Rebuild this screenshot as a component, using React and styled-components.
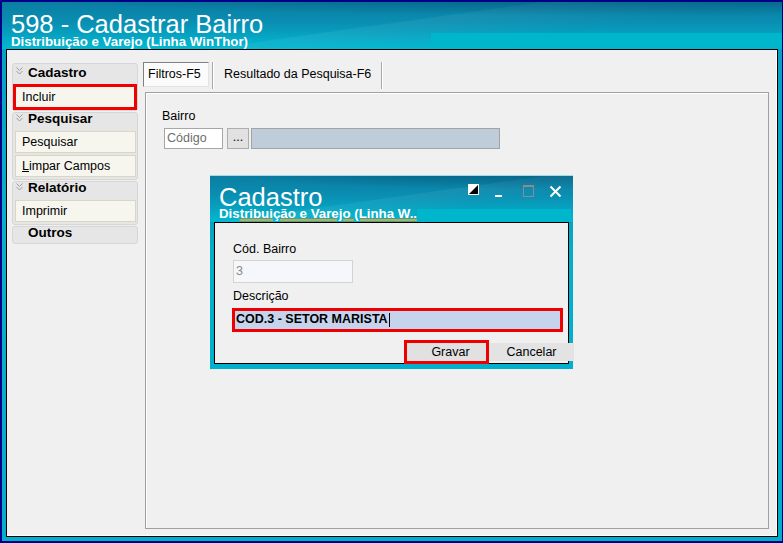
import React from "react";
import styled, { createGlobalStyle } from "styled-components";

const GlobalStyle = createGlobalStyle`
  html, body { margin: 0; padding: 0; }
  body {
    font-family: "Liberation Sans", Arial, sans-serif;
    overflow: hidden;
    background: #ffffff;
  }
  * { box-sizing: border-box; }
`;

const skin = `
  radial-gradient(140% 90% at 82% -25%, rgba(0, 60, 95, 0.6) 0%, rgba(0, 60, 95, 0) 62%),
  radial-gradient(160% 120% at 30% 140%, rgba(0, 200, 220, 0.35) 0%, rgba(0, 200, 220, 0) 60%),
  linear-gradient(172deg, rgba(255,255,255,0) 48%, rgba(255,255,255,0.06) 49%, rgba(255,255,255,0) 70%),
  linear-gradient(180deg, #0a7ea2 0%, #0a8db1 40%, #05a9c6 80%, #02b4cd 100%)
`;

const Window = styled.div`
  position: relative;
  width: 783px;
  height: 543px;
  background: #000088;
  padding: 2px 1px 2px 2px;
`;

const Frame = styled.div`
  height: 100%;
  display: flex;
  flex-direction: column;
  background: linear-gradient(180deg, #0a9cbf 0%, #04b0ca 40%, #04aecb 100%);
`;

const TitleBar = styled.div`
  height: 47px;
  flex: none;
  display: flex;
  flex-direction: column;
  padding: 11px 0 0 9px;
  background: ${skin};
  color: #fff;
`;

const Title = styled.div`
  font-size: 25.5px;
  line-height: 22px;
  height: 22px;
  white-space: nowrap;
`;

const SubRow = styled.div`
  display: flex;
  align-items: flex-end;
  flex: 1;
  margin-top: ${(p) => p.$mt || "-3px"};
`;

const Subtitle = styled.div`
  font-size: 13.3px;
  font-weight: bold;
  line-height: 11px;
  white-space: nowrap;
  margin-bottom: ${(p) => p.$mb || "2px"};
`;

const Mark = styled.span`
  text-decoration: underline;
  text-decoration-color: #f39a1e;
  text-decoration-thickness: 2px;
  text-underline-offset: 1px;
`;

const Band = styled.div`
  background: #00b6cc;
  height: ${(p) => p.$h};
  margin-bottom: ${(p) => p.$mb || "0"};
  ${(p) => (p.$w ? `width: ${p.$w}; margin-left: auto;` : "flex: 1;")}
  margin-right: ${(p) => p.$mr || "0"};
`;

const Client = styled.div`
  flex: 1;
  margin: 0 4px 4px 4px;
  border: 1px solid #000;
  box-shadow: inset -1px -1px 0 #ffffff;
  background: #f0f0f0;
  display: flex;
  padding: 13px 8px 7px 5px;
  min-height: 0;
`;

const Sidebar = styled.div`
  width: 126px;
  flex: none;
  display: flex;
  flex-direction: column;
  gap: 1px;
`;

const Group = styled.div`
  background: #e6e6e6;
  border: 1px solid #d6d6d6;
  border-radius: 3px;
  display: flex;
  flex-direction: column;
  padding-bottom: ${(p) => (p.$tight ? "0" : "2px")};
  gap: 2px;
`;

const GroupHeader = styled.div`
  display: flex;
  align-items: flex-start;
  height: ${(p) => (p.$first ? "20px" : "18px")};
  padding: ${(p) => (p.$first ? "2px" : "0")} 0 0 ${(p) => (p.$noIcon ? "15px" : "3px")};
  font-size: 13.5px;
  font-weight: bold;
  line-height: ${(p) => (p.$first ? "13px" : "12px")};
  color: #000;
  gap: 5px;
  margin-bottom: -2px;
`;

const Chevron = styled.svg`
  flex: none;
  width: 7px;
  height: 8px;
  margin-top: 1px;
`;

const SideButton = styled.div`
  height: ${(p) => (p.$hl ? "26px" : "22px")};
  margin: ${(p) => (p.$hl ? "0" : "0 1px 0 2px")};
  border: ${(p) => (p.$hl ? "3px solid #f00000" : "1px solid #d8d8c2")};
  background: #f6f6ee;
  font-size: 12.5px;
  line-height: 20px;
  padding-left: 6px;
  color: #000;
  white-space: nowrap;
`;

const Main = styled.div`
  flex: 1;
  margin-left: 5px;
  margin-top: -1px;
  display: flex;
  flex-direction: column;
  min-width: 0;
`;

const TabBar = styled.div`
  display: flex;
  height: 25px;
  flex: none;
  margin-bottom: 5px;
`;

const Tab = styled.div`
  height: 25px;
  font-size: 12.5px;
  line-height: 23px;
  white-space: nowrap;
  color: #000;
  ${(p) =>
    p.$active
      ? `
    width: 66px;
    padding-left: 4px;
    border: 1px solid;
    border-color: #808080 #e3e3e3 #e3e3e3 #808080;
    background: #fbfbfb;
  `
      : `
    padding: 1px 10px 0 10px;
  `}
`;

const TabSep = styled.div`
  width: 2px;
  height: 27px;
  margin-left: ${(p) => p.$ml || "0"};
  border-left: 1px solid #a9a9a9;
  border-right: 1px solid #ffffff;
`;

const Panel = styled.div`
  flex: 1;
  margin-left: 2px;
  border: 1px solid #a0a0a0;
  box-shadow: inset 1px 1px 0 #ffffff;
  padding: 16px 0 0 16px;
  display: flex;
  flex-direction: column;
`;

const Label = styled.div`
  font-size: 12.5px;
  line-height: 15px;
  color: #000;
  margin-top: ${(p) => p.$mt || "0"};
`;

const FieldRow = styled.div`
  display: flex;
  margin-top: 4px;
  margin-left: 2px;
  height: 21px;
`;

const TextBox = styled.div`
  width: ${(p) => p.$w};
  height: ${(p) => p.$h || "21px"};
  margin-left: ${(p) => p.$ml || "0"};
  margin-top: ${(p) => p.$mt || "0"};
  border: 1px solid ${(p) => p.$bc || "#a6a6a6"};
  background: ${(p) => p.$bg || "#ffffff"};
  color: ${(p) => p.$color || "#6e6e6e"};
  font-size: 12.5px;
  line-height: ${(p) => (p.$h ? `calc(${p.$h} - 2px)` : "19px")};
  padding-left: 2px;
  white-space: nowrap;
`;

const DotsButton = styled.div`
  width: 22px;
  height: 21px;
  margin-left: 4px;
  border: 1px solid #adadad;
  background: #e1e1e1;
  font-size: 12.5px;
  line-height: 17px;
  text-align: center;
  color: #000;
`;

const Dialog = styled.div`
  position: absolute;
  left: 210px;
  top: 175px;
  width: 363px;
  height: 194px;
  display: flex;
  flex-direction: column;
  padding: 0 4px 5px 4px;
  background: linear-gradient(180deg, #0a8fb3 0%, #04aecb 40%, #00b0cc 100%);
  border-top: 1px solid #9fdce8;
`;

const DialogHeader = styled.div`
  height: 46px;
  flex: none;
  display: flex;
  flex-direction: column;
  margin: 0 -4px;
  padding: 10px 4px 0 9px;
  background: ${skin};
  color: #fff;
`;

const TopRow = styled.div`
  display: flex;
  height: 22px;
  flex: none;
`;

const Controls = styled.div`
  display: flex;
  margin-left: auto;
  margin-top: -3px;
`;

const CtrlButton = styled.div`
  width: 27px;
  height: 16px;
  display: flex;
`;

const Body = styled.div`
  flex: 1;
  border: 1px solid #000;
  background: #f0f0f0;
  padding: 19px 0 0 18px;
  display: flex;
  flex-direction: column;
  min-height: 0;
`;

const DescBox = styled.div`
  width: 331px;
  height: 25px;
  margin-top: 4px;
  margin-left: -1px;
  border: 3px solid #ee0000;
  background: #c6d3ed;
  display: flex;
  align-items: center;
  padding-left: 1px;
  padding-bottom: 2px;
  font-size: 12.5px;
  font-weight: bold;
  color: #000;
  white-space: nowrap;
`;

const Caret = styled.span`
  display: inline-block;
  width: 1px;
  height: 14px;
  background: #000;
  margin-left: 1px;
  margin-top: 2px;
`;

const ButtonRow = styled.div`
  display: flex;
  justify-content: flex-end;
  align-items: flex-start;
  margin-top: 8px;
  margin-right: -6px;
`;

const DlgButton = styled.div`
  width: 85px;
  flex: none;
  font-size: 12.5px;
  color: #000;
  text-align: center;
  background: #e1e1e1;
  white-space: nowrap;
  ${(p) =>
    p.$hl
      ? `
    height: 24px;
    border: 3px solid #ee0000;
    line-height: 18px;
    padding-left: 8px;
  `
      : `
    height: 18px;
    margin-top: 3px;
    line-height: 18px;
    background: #e3e3e3;
  `}
`;

function ChevronIcon() {
  return (
    <Chevron viewBox="0 0 7 8">
      <polyline points="0.5,0.5 3.5,3.5 6.5,0.5" fill="none" stroke="#9c9c9c" strokeWidth="1" />
      <polyline points="0.5,4 3.5,7 6.5,4" fill="none" stroke="#9c9c9c" strokeWidth="1" />
    </Chevron>
  );
}

function Ctrl({ kind }) {
  let g = null;
  if (kind === "dock") {
    g = (
      <>
        <rect x="7" y="1" width="11" height="11" fill="#ffffff" />
        <polygon points="17,2 17,11 8,11" fill="#000000" />
      </>
    );
  } else if (kind === "min") {
    g = <rect x="7" y="12" width="7" height="2" fill="#ffffff" />;
  } else if (kind === "max") {
    g = (
      <>
        <rect x="8.5" y="2.5" width="10" height="11" fill="none" stroke="#8c8c8c" strokeWidth="1" />
        <rect x="8" y="2" width="11" height="2" fill="#8c8c8c" />
      </>
    );
  } else {
    g = (
      <>
        <line x1="8.5" y1="3.5" x2="18.5" y2="13.5" stroke="#ffffff" strokeWidth="2" />
        <line x1="18.5" y1="3.5" x2="8.5" y2="13.5" stroke="#ffffff" strokeWidth="2" />
      </>
    );
  }
  return (
    <CtrlButton>
      <svg width="27" height="16" viewBox="0 0 27 16">
        {g}
      </svg>
    </CtrlButton>
  );
}

export default function App() {
  return (
    <>
      <GlobalStyle />
      <Window>
        <Frame>
          <TitleBar>
            <Title>598 - Cadastrar Bairro</Title>
            <SubRow>
              <Subtitle>Distribuição e Varejo (Linha WinThor)</Subtitle>
              <Band $w="351px" $h="15px" $mb="1px" />
            </SubRow>
          </TitleBar>
          <Client>
            <Sidebar>
              <Group $tight>
                <GroupHeader $first>
                  <ChevronIcon />
                  Cadastro
                </GroupHeader>
                <SideButton $hl>Incluir</SideButton>
              </Group>
              <Group>
                <GroupHeader>
                  <ChevronIcon />
                  Pesquisar
                </GroupHeader>
                <SideButton>Pesquisar</SideButton>
                <SideButton>
                  <u>L</u>impar Campos
                </SideButton>
              </Group>
              <Group>
                <GroupHeader>
                  <ChevronIcon />
                  Relatório
                </GroupHeader>
                <SideButton>Imprimir</SideButton>
              </Group>
              <Group $tight>
                <GroupHeader $noIcon>Outros</GroupHeader>
              </Group>
            </Sidebar>
            <Main>
              <TabBar>
                <Tab $active>Filtros-F5</Tab>
                <TabSep $ml="3px" />
                <Tab>Resultado da Pesquisa-F6</Tab>
                <TabSep />
              </TabBar>
              <Panel>
                <Label>Bairro</Label>
                <FieldRow>
                  <TextBox $w="59px">Código</TextBox>
                  <DotsButton>...</DotsButton>
                  <TextBox $w="249px" $ml="2px" $bg="#bfccda" $bc="#a3a3a3" />
                </FieldRow>
              </Panel>
            </Main>
          </Client>
        </Frame>
        <Dialog>
          <DialogHeader>
            <TopRow>
              <Title>Cadastro</Title>
              <Controls>
                <Ctrl kind="dock" />
                <Ctrl kind="min" />
                <Ctrl kind="max" />
                <Ctrl kind="close" />
              </Controls>
            </TopRow>
            <SubRow $mt="-1px">
              <Subtitle $mb="3px">
                Dis<Mark>tribuição e Varejo (Linha W..</Mark>
              </Subtitle>
              <Band $h="13px" $mr="-2px" />
            </SubRow>
          </DialogHeader>
          <Body>
            <Label>Cód. Bairro</Label>
            <TextBox $w="120px" $h="23px" $mt="3px" $bg="#f5f7fb" $bc="#d3d3d3" $color="#8a8a8a">
              3
            </TextBox>
            <Label $mt="6px">Descrição</Label>
            <DescBox>
              COD.3 - SETOR MARISTA
              <Caret />
            </DescBox>
            <ButtonRow>
              <DlgButton $hl>Gravar</DlgButton>
              <DlgButton>Cancelar</DlgButton>
            </ButtonRow>
          </Body>
        </Dialog>
      </Window>
    </>
  );
}
